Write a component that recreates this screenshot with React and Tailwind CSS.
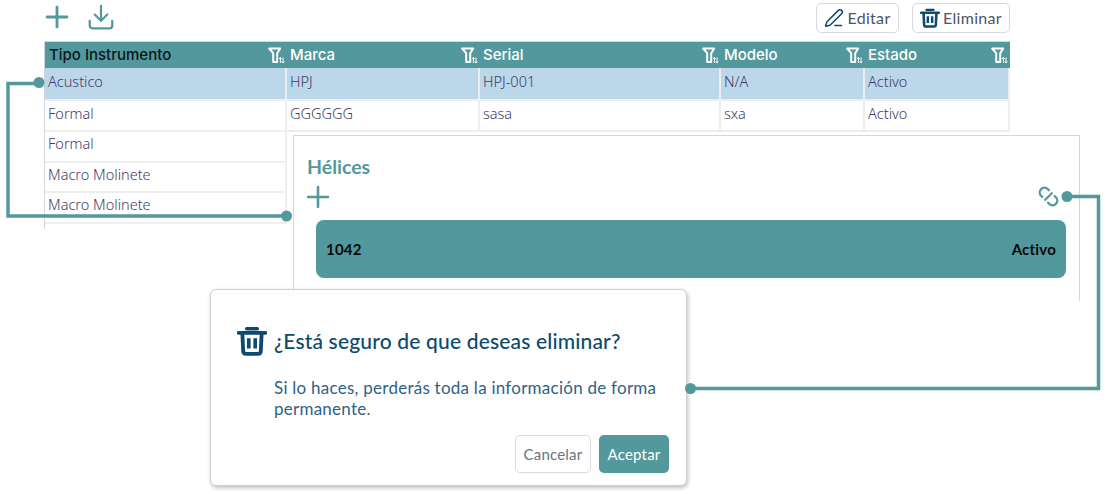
import React from "react";
import { Plus, Download, PenLine } from "lucide-react";

const TEAL = "#53989c";

function FilterSort({ color = "#ffffff" }) {
  return (
    <svg width="18" height="17" viewBox="0 0 18 17" fill="none" className="shrink-0">
      <path d="M1.200 1.500h11L9.200 6.200V15H5.200V6.200z" stroke={color} strokeWidth="2" strokeLinejoin="round" />
      <path d="M12.400 10.500V16M11.200 12l1.200-1.500 1.200 1.500M15 10.500V16M13.800 14.500l1.200 1.500 1.200-1.500" stroke={color} strokeWidth="1" />
    </svg>
  );
}

function Trash({ size = 20, color = "#0c4a6e" }) {
  return (
    <svg width={size} height={size} viewBox="0 0 28 28" fill="none">
      <path d="M1.500 6.500h25" stroke={color} strokeWidth="3.500" strokeLinecap="round" />
      <path d="M9 2.500h10" stroke={color} strokeWidth="3.200" strokeLinecap="round" />
      <path d="M5 7l.8 16.400c.1 1.500 1.100 2.600 2.500 2.600h11.400c1.400 0 2.400-1.100 2.500-2.600L23 7" stroke={color} strokeWidth="3.600" />
      <path d="M11 11.500v9.500M17 11.500v9.500" stroke={color} strokeWidth="3.400" />
    </svg>
  );
}

function Unlink({ color = TEAL }) {
  return (
    <svg width="25" height="25" viewBox="0 0 24 24" fill="none" stroke={color} strokeWidth="2.200" strokeLinecap="round">
      <g transform="rotate(45 12 12)">
        <path d="M8 16.500H6.500a4.500 4.500 0 0 1 0-9H8" />
        <path d="M16 7.500h1.500a4.500 4.500 0 0 1 0 9H16" />
        <path d="M12 7.500v9" />
      </g>
    </svg>
  );
}

const cols = "grid grid-cols-[242px_193px_241px_144px_145px]";
const headers = ["Tipo Instrumento", "Marca", "Serial", "Modelo", "Estado"];
const rows = [
  ["Acustico", "HPJ", "HPJ-001", "N/A", "Activo"],
  ["Formal", "GGGGGG", "sasa", "sxa", "Activo"],
];
const extra = ["Formal", "Macro Molinete", "Macro Molinete"];
const bodyFont = "font-['Noto_Sans',sans-serif] text-[14.500px] font-light text-[#3f3d66]";
const uiFont = "font-['Lato','Noto_Sans',sans-serif]";

export default function App() {
  return (
    <div className="relative h-[494px] w-[1106px] overflow-hidden bg-white">
      {/* Toolbar */}
      <div className="flex h-[41px] items-start justify-between pl-[40px] pr-[96px]">
        <div className="flex items-center gap-[12px]">
          <Plus size={34} color={TEAL} strokeWidth={2} />
          <Download size={30} color={TEAL} strokeWidth={1.800} />
        </div>
        <div className={`flex gap-[13px] pt-[3px] text-[16px] tracking-[0.300px] text-[#4a5568] ${uiFont}`}>
          <button className="flex h-[30px] w-[83px] items-center justify-center gap-[3px] rounded-[5px] border border-[#d5d9e0]">
            <PenLine size={20} color="#0c4a6e" strokeWidth={1.800} />
            Editar
          </button>
          <button className="flex h-[30px] w-[98px] items-center justify-center gap-[3px] rounded-[5px] border border-[#d5d9e0]">
            <Trash size={20} />
            Eliminar
          </button>
        </div>
      </div>

      {/* Table */}
      <div className="ml-[44px] h-[188px] w-[966px] border-l border-[#d4d6de]">
        <div className={`${cols} h-[27px] border-t border-[#d4d6de] bg-[#53989c] font-['Inter',sans-serif] text-[15px] font-medium text-white`}>
          {headers.map((h, i) => (
            <div key={h} className={`flex items-center justify-between pr-[1px] ${i === 0 ? "pl-[4px]" : "pl-[3px]"}`}>
              <span className={`pt-[1px] ${i === 0 ? "text-[#0b1620]" : ""}`}>{h}</span>
              <FilterSort />
            </div>
          ))}
        </div>
        {rows.map((r, ri) => (
          <div
            key={ri}
            className={`${cols} ${ri === 0 ? "h-[33px] border-b-[2px] border-[#eeeeee] bg-[#bcd6ea]" : "h-[31px] border-b-[2px] border-[#eeeeee]"}`}
          >
            {r.map((c, i) => (
              <div key={i} className={`flex items-center border-r-[2px] border-[#eeeeee] pl-[3px] ${ri === 0 ? "pb-[3px]" : "pb-[4px]"} ${bodyFont}`}>
                {c}
              </div>
            ))}
          </div>
        ))}
        {extra.map((c, i) => (
          <div key={i} className={`flex h-[30.500px] w-[242px] items-center border-b-[2px] border-r-[2px] border-[#eeeeee] pb-[4px] pl-[3px] ${bodyFont}`}>
            {c}
          </div>
        ))}
      </div>

      {/* Hélices panel, layered over the table */}
      <div className={`absolute left-[293px] top-[135px] h-[166px] w-[787px] border-x border-t border-[#d4d6de] bg-white ${uiFont}`}>
        <div className="pl-[13px] pt-[19px] text-[19.500px] font-bold leading-[24px] text-[#53989c]">Hélices</div>
        <div className="flex h-[35px] items-center justify-between pl-[7px] pr-[18px]">
          <Plus size={34} color={TEAL} strokeWidth={1.800} />
          <Unlink />
        </div>
        <div className="ml-[22px] mt-[6px] flex h-[58px] w-[750px] items-center justify-between rounded-[8px] bg-[#53989c] px-[10px] text-[15px] font-bold tracking-[0.200px] text-[#0a0a0a]">
          <span>1042</span>
          <span>Activo</span>
        </div>
      </div>

      {/* Connectors */}
      <svg className="pointer-events-none absolute left-0 top-0" width="1106" height="494" fill="none">
        <path d="M39 83.500H8V216H286" stroke={TEAL} strokeWidth="3.500" />
        <circle cx="39" cy="82.500" r="5.500" fill={TEAL} />
        <circle cx="286.500" cy="216" r="5.500" fill={TEAL} />
      </svg>

      {/* Dialog */}
      <div className={`absolute left-[210px] top-[289px] h-[197px] w-[477px] rounded-[6px] border border-[#cfcfcf] bg-white shadow-[1px_2px_4px_rgba(0,0,0,0.25)] ${uiFont}`}>
        <div className="flex items-center gap-[7px] pl-[26px] pt-[36px]">
          <Trash size={30} />
          <span className="text-[21px] font-medium leading-[30px] tracking-[0.170px] text-[#0c4a6e]">¿Está seguro de que deseas eliminar?</span>
        </div>
        <p className="ml-[63px] mt-[21px] w-[400px] text-[17px] leading-[21px] tracking-[0.250px] text-[#2f6285]">
          Si lo haces, perderás toda la información de forma permanente.
        </p>
        <div className="mt-[16px] flex justify-end gap-[8px] pr-[17px] text-[15px] tracking-[0.200px]">
          <button className="h-[38px] w-[76px] rounded-[5px] border border-[#d8dbe2] text-[#6b7280]">Cancelar</button>
          <button className="h-[38px] w-[70px] rounded-[5px] bg-[#53989c] text-white">Aceptar</button>
        </div>
      </div>

      <svg className="pointer-events-none absolute left-0 top-0" width="1106" height="494" fill="none">
        <path d="M1067 196.500H1098.500V388.500H690" stroke={TEAL} strokeWidth="3.500" />
        <circle cx="1067" cy="196.500" r="5.500" fill={TEAL} />
        <circle cx="690.500" cy="388.500" r="5.500" fill={TEAL} />
      </svg>
    </div>
  );
}
